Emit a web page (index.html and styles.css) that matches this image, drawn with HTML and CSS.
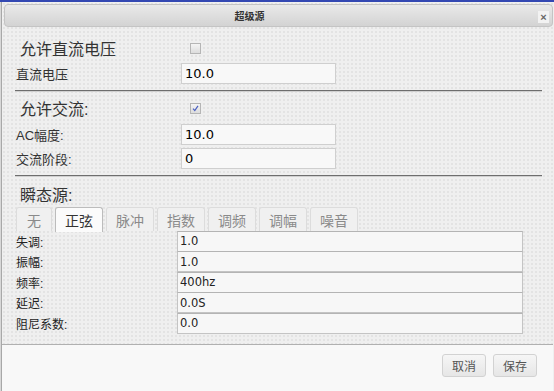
FILE: index.html
```html
<!DOCTYPE html>
<html lang="zh">
<head>
  <meta charset="UTF-8">
  <title>超级源</title>
  <link rel="stylesheet" href="styles.css">
</head>
<body>

  <div class="dialog">
    <div class="titlebar">
      <span class="title">超级源</span>
      <span class="close">&times;</span>
    </div>

    <div class="content">
      <div class="row head">
        <span class="label">允许直流电压</span>
        <span class="checkbox"></span>
      </div>
      <div class="row">
        <span class="label">直流电压</span>
        <input class="field" type="text" value="10.0">
      </div>

      <div class="sep"></div>

      <div class="row head head-ac">
        <span class="label">允许交流:</span>
        <span class="checkbox checked">
          <svg width="7" height="7" viewBox="0 0 7 7"><path d="M1 3.6 L2.8 5.6 L6 0.8" fill="none" stroke="#4a5fc0" stroke-width="1.2"/></svg>
        </span>
      </div>
      <div class="row row-ac">
        <span class="label">AC幅度:</span>
        <input class="field" type="text" value="10.0">
      </div>
      <div class="row row-phase">
        <span class="label">交流阶段:</span>
        <input class="field" type="text" value="0">
      </div>

      <div class="sep sep2"></div>

      <div class="row head head-tr">
        <span class="label">瞬态源:</span>
      </div>

      <div class="tabs">
        <span class="tab first">无</span>
        <span class="tab active">正弦</span>
        <span class="tab">脉冲</span>
        <span class="tab">指数</span>
        <span class="tab">调频</span>
        <span class="tab">调幅</span>
        <span class="tab">噪音</span>
      </div>

      <div class="params">
        <div class="param"><span class="label">失调:</span><input class="cell" type="text" value="1.0"></div>
        <div class="param"><span class="label">振幅:</span><input class="cell" type="text" value="1.0"></div>
        <div class="param"><span class="label">频率:</span><input class="cell" type="text" value="400hz"></div>
        <div class="param"><span class="label">延迟:</span><input class="cell" type="text" value="0.0S"></div>
        <div class="param"><span class="label">阻尼系数:</span><input class="cell" type="text" value="0.0"></div>
      </div>
    </div>

    <div class="footer">
      <button class="button">取消</button>
      <button class="button">保存</button>
    </div>
  </div>

</body>
</html>
```

FILE: styles.css
```css
body {
  margin: 0;
  font-family: "Liberation Sans", "Noto Sans CJK SC", sans-serif;
  background: linear-gradient(#3348b2 0, #3348b2 2px, #d8d8d8 2px);
  overflow: hidden;
}

.dialog {
  margin: 2px 0 0 1px;
  width: 553px;
  height: 389px;
  box-sizing: border-box;
  padding: 2px 1px 0 1px;
  border-left: 1px solid #a8a8a8;
  background-color: #efefef;
  background-image: radial-gradient(#e3e3e3 0.8px, transparent 0.8px);
  background-size: 4px 4px;
  display: flex;
  flex-direction: column;
}

/* Title bar */
.titlebar {
  height: 23px;
  box-sizing: border-box;
  margin-left: 1px;
  border: 1px solid #c4c4c4;
  border-radius: 4px;
  background: linear-gradient(#e9e9e9, #d3d3d3);
  display: flex;
  align-items: center;
  position: relative;
}

.title {
  flex: 1;
  text-align: center;
  padding-right: 58px;
  font-size: 10px;
  font-weight: bold;
  color: #333;
}

.close {
  position: absolute;
  right: 3px;
  top: 6px;
  width: 11px;
  height: 12px;
  background: #f2f2f2;
  color: #666;
  font-size: 11px;
  font-weight: bold;
  line-height: 12px;
  text-align: center;
}

/* Form area */
.content {
  height: 317px;
  box-sizing: border-box;
  padding: 9px 11px 0 12px;
}

.row {
  display: flex;
  align-items: center;
  height: 23px;
  margin-top: 2px;
}

.label {
  width: 166px;
  flex: none;
  padding-left: 1px;
  box-sizing: border-box;
  font-size: 13px;
  color: #333;
}

.head {
  height: 24px;
  margin-top: 0;
}

.head .label {
  padding-left: 5px;
  font-size: 16px;
}

.head-ac {
  margin-top: 4px;
}

.row-ac {
  margin-top: 3px;
}

.row-phase {
  margin-top: 1px;
}

.head-tr {
  margin-top: 5px;
}

.checkbox {
  margin-left: 9px;
  width: 9px;
  height: 9px;
  border: 1px solid #b5b5b5;
  background: linear-gradient(#f4f4f4, #dcdcdc);
  display: flex;
  align-items: center;
  justify-content: center;
}

.field {
  width: 155px;
  height: 21px;
  box-sizing: border-box;
  margin: 0;
  padding: 0 3px;
  border: 1px solid #cfcfcf;
  background: #f8f8f8;
  font-family: "DejaVu Sans", sans-serif;
  font-size: 13px;
  color: #000;
  outline: none;
}

.sep {
  margin-top: 5px;
  height: 1px;
  background: #6e6e6e;
  border-bottom: 1px solid #d0d0d0;
  width: 527px;
}

.sep2 {
  margin-top: 5px;
}

/* Tabs */
.tabs {
  display: flex;
  gap: 3px;
  margin-top: 1px;
  padding-left: 1px;
  height: 24px;
  position: relative;
  z-index: 1;
}

.tab {
  width: 48px;
  box-sizing: border-box;
  border: 1px solid #dcdcdc;
  border-bottom: none;
  border-radius: 3px 3px 0 0;
  background: #f0f0f0;
  color: #8a8a8a;
  font-size: 14px;
  display: flex;
  align-items: center;
  justify-content: center;
}

.tab.first {
  width: 36px;
}

.tab.active {
  height: 25px;
  border-color: #bcbcbc;
  background: #fbfbfb;
  color: #333;
}

/* Parameter table */
.params {
  display: flex;
  flex-direction: column;
  gap: 0.5px;
}

.param {
  display: flex;
  align-items: center;
  height: 20px;
}

.param .label {
  width: 162px;
  font-size: 12px;
  color: #222;
}

.cell {
  width: 346px;
  height: 21px;
  box-sizing: border-box;
  margin: 0;
  padding: 0 2px;
  border: 1px solid #c4c4c4;
  border-top-color: #b4b4b4;
  background: #f7f7f7;
  font-family: "DejaVu Sans", sans-serif;
  font-size: 11.5px;
  color: #222;
  outline: none;
}

/* Footer */
.footer {
  flex: 1;
  margin-left: -1px;
  border-top: 1px solid #b0b0b0;
  background: #f8f8f8;
  display: flex;
  justify-content: flex-end;
  align-items: flex-start;
  gap: 7px;
  padding: 9px 16px 0 0;
}

.button {
  width: 44px;
  height: 23px;
  padding: 0;
  border: 1px solid #d2d2d2;
  border-radius: 3px;
  background: linear-gradient(#f6f6f6, #e6e6e6);
  color: #555;
  font-family: "Noto Sans CJK SC", sans-serif;
  font-size: 12px;
  cursor: pointer;
}
```
